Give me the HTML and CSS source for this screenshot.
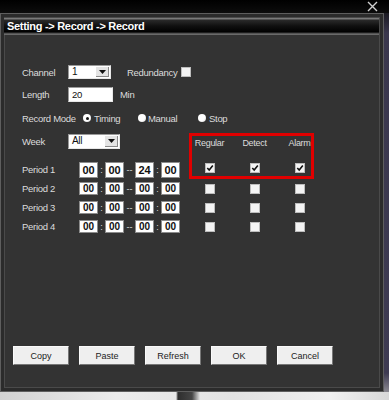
FILE: index.html
```html
<!DOCTYPE html>
<html lang="en">
<head>
    <meta charset="UTF-8">
    <meta name="viewport" content="width=device-width, initial-scale=1.0">
    <title>Setting - Record</title>
    <link rel="stylesheet" href="styles.css">
</head>
<body>
    <div class="topbar">
        <svg class="close" width="11" height="11" viewBox="0 0 11 11">
            <path d="M1 1 L10 10 M10 1 L1 10" stroke="#d0d0d0" stroke-width="1.4" fill="none"/>
        </svg>
    </div>

    <div class="main">
        <div class="dialog">
            <div class="title">Setting -&gt; Record -&gt; Record</div>

            <div class="content">
                <div class="row row-channel">
                    <span class="label">Channel</span>
                    <div class="select select-channel">
                        <span class="value">1</span>
                        <span class="arrow"><svg width="7" height="4" viewBox="0 0 7 4"><path d="M0 0 H7 L3.5 4 Z" fill="#111"/></svg></span>
                    </div>
                    <span class="text redundancy">Redundancy</span>
                    <span class="box"></span>
                </div>

                <div class="row row-length">
                    <span class="label">Length</span>
                    <div class="input">20</div>
                    <span class="text unit">Min</span>
                </div>

                <div class="row row-mode">
                    <span class="label label-wide">Record Mode</span>
                    <span class="radio checked"></span><span class="text opt opt-timing">Timing</span>
                    <span class="radio"></span><span class="text opt opt-manual">Manual</span>
                    <span class="radio"></span><span class="text opt">Stop</span>
                </div>

                <div class="schedule">
                    <div class="highlight"></div>

                    <div class="line line-week">
                        <span class="label">Week</span>
                        <div class="cell">
                            <div class="select select-week">
                                <span class="value">All</span>
                                <span class="arrow"><svg width="7" height="4" viewBox="0 0 7 4"><path d="M0 0 H7 L3.5 4 Z" fill="#111"/></svg></span>
                            </div>
                        </div>
                        <span class="head">Regular</span>
                        <span class="head">Detect</span>
                        <span class="head">Alarm</span>
                    </div>

                    <div class="line line-first">
                        <span class="label">Period 1</span>
                        <div class="times">
                            <span class="time">00</span><span class="sep">:</span><span class="time">00</span><span class="sep sep-dash">--</span><span class="time">24</span><span class="sep">:</span><span class="time">00</span>
                        </div>
                        <span class="check"><span class="box"><svg width="8" height="8" viewBox="0 0 8 8"><path d="M1.3 4 L3.2 6 L6.8 1.6" stroke="#111" stroke-width="1.6" fill="none"/></svg></span></span>
                        <span class="check"><span class="box"><svg width="8" height="8" viewBox="0 0 8 8"><path d="M1.3 4 L3.2 6 L6.8 1.6" stroke="#111" stroke-width="1.6" fill="none"/></svg></span></span>
                        <span class="check"><span class="box"><svg width="8" height="8" viewBox="0 0 8 8"><path d="M1.3 4 L3.2 6 L6.8 1.6" stroke="#111" stroke-width="1.6" fill="none"/></svg></span></span>
                    </div>

                    <div class="line">
                        <span class="label">Period 2</span>
                        <div class="times">
                            <span class="time">00</span><span class="sep">:</span><span class="time">00</span><span class="sep sep-dash">--</span><span class="time">00</span><span class="sep">:</span><span class="time">00</span>
                        </div>
                        <span class="check"><span class="box"></span></span>
                        <span class="check"><span class="box"></span></span>
                        <span class="check"><span class="box"></span></span>
                    </div>

                    <div class="line">
                        <span class="label">Period 3</span>
                        <div class="times">
                            <span class="time">00</span><span class="sep">:</span><span class="time">00</span><span class="sep sep-dash">--</span><span class="time">00</span><span class="sep">:</span><span class="time">00</span>
                        </div>
                        <span class="check"><span class="box"></span></span>
                        <span class="check"><span class="box"></span></span>
                        <span class="check"><span class="box"></span></span>
                    </div>

                    <div class="line">
                        <span class="label">Period 4</span>
                        <div class="times">
                            <span class="time">00</span><span class="sep">:</span><span class="time">00</span><span class="sep sep-dash">--</span><span class="time">00</span><span class="sep">:</span><span class="time">00</span>
                        </div>
                        <span class="check"><span class="box"></span></span>
                        <span class="check"><span class="box"></span></span>
                        <span class="check"><span class="box"></span></span>
                    </div>
                </div>
            </div>

            <div class="buttons">
                <button>Copy</button>
                <button>Paste</button>
                <button>Refresh</button>
                <button>OK</button>
                <button>Cancel</button>
            </div>
        </div>
        <div class="edge"></div>
    </div>

    <div class="photo"></div>
</body>
</html>
```

FILE: styles.css
```css
body {
    margin: 0;
    width: 389px;
    height: 400px;
    overflow: hidden;
    background: #000;
    font-family: 'Liberation Sans', sans-serif;
    display: flex;
    flex-direction: column;
}
.topbar {
    height: 13px;
    background: linear-gradient(180deg, #000, #0c0c0c);
    display: flex;
    justify-content: flex-end;
    align-items: center;
    padding-right: 11px;
}
.close {
    display: block;
}
.main {
    display: flex;
    height: 379px;
}
.dialog {
    width: 384px;
    box-sizing: border-box;
    background: #333333;
    border: 1px solid #5e5e5e;
    box-shadow: inset 0 0 0 3px #2b2b2b, inset 0 0 0 4px #4a4a4a;
    padding: 4px 3px 0 3px;
    display: flex;
    flex-direction: column;
}
.edge {
    width: 5px;
    background: linear-gradient(180deg, #1b1a22 0, #3a374d 20px, #3e3b52 360px, #8a8890 379px);
}
.photo {
    flex: 1;
    background:
        linear-gradient(90deg, transparent 0, transparent 176px, #2e2e2e 178px, #454545 192px, transparent 200px),
        linear-gradient(90deg, #d2d2d2, #ececec 30%, #e2e2e2 60%, #f0f0f0 85%, #d8d8d8);
}

/* pasek tytulu */
.title {
    height: 17px;
    box-sizing: border-box;
    padding: 1px 0 0 3px;
    color: #fff;
    font-weight: bold;
    font-size: 11px;
    letter-spacing: -0.3px;
    line-height: 15px;
    background: linear-gradient(180deg, #7a7a7a 0, #7a7a7a 1px, #2a2a2a 2px, #101010 8px, #000 14px, #3a3a3a 15px, #6a6a6a 16px, #6a6a6a 17px);
    border-right: 1px solid #4a4a4a;
}

.content {
    padding: 30px 0 0 18px;
    position: relative;
    color: #dcdcdc;
    font-size: 9.5px;
    letter-spacing: -0.3px;
}
.row {
    display: flex;
    align-items: center;
}
.label {
    width: 46px;
    flex-shrink: 0;
}
.label-wide {
    width: 61px;
}
.text {
    white-space: nowrap;
}
.row-channel {
    height: 14px;
}
.row-length {
    height: 15px;
    margin-top: 8px;
}
.row-mode {
    height: 14px;
    margin-top: 9px;
}

.select {
    display: flex;
    box-sizing: border-box;
    background: #fff;
    border: 1px solid #9a9a9a;
    border-right-color: #e8e8e8;
    border-bottom-color: #e8e8e8;
    color: #111;
    height: 14px;
    padding: 1px;
}
.select-channel {
    width: 43px;
}
.select-week {
    width: 52px;
    height: 15px;
}
.select .value {
    flex: 1;
    padding-left: 2px;
    font-size: 10px;
    line-height: 10px;
}
.select .arrow {
    width: 13px;
    background: #e4e4e4;
    border-left: 1px solid #fff;
    box-shadow: inset -1px -1px 0 #8a8a8a;
    display: flex;
    align-items: center;
    justify-content: center;
}
.select .arrow svg {
    display: block;
}
.redundancy {
    margin-left: 16px;
    margin-right: 4px;
}
.box {
    width: 8px;
    height: 8px;
    background: #f4f4f4;
    border: 1px solid #bdbdbd;
    display: inline-flex;
    align-items: center;
    justify-content: center;
}
.box svg {
    display: block;
}

.input {
    width: 45px;
    height: 15px;
    box-sizing: border-box;
    background: #fff;
    border: 1px solid #9a9a9a;
    border-right-color: #e8e8e8;
    border-bottom-color: #e8e8e8;
    color: #111;
    padding: 1px 0 0 3px;
    line-height: 12px;
}
.unit {
    margin-left: 7px;
}

.radio {
    width: 8px;
    height: 8px;
    border-radius: 50%;
    background: radial-gradient(circle at 40% 40%, #fff 0, #fff 50%, #cfcfcf 100%);
    display: inline-flex;
    align-items: center;
    justify-content: center;
    flex-shrink: 0;
}
.radio.checked::after {
    content: '';
    width: 3px;
    height: 3px;
    border-radius: 50%;
    background: #111;
}
.opt {
    margin-left: 3px;
}
.opt-timing {
    width: 44px;
}
.opt-manual {
    width: 50px;
    margin-left: 2px;
}

/* tabela harmonogramu */
.schedule {
    position: relative;
    margin-top: 8px;
}
.highlight {
    position: absolute;
    left: 167px;
    top: 0;
    width: 125px;
    height: 46px;
    box-sizing: border-box;
    border: 3px solid #e00000;
}
.line {
    display: grid;
    grid-template-columns: 46px 119px 45px 45px 45px;
    align-items: center;
    height: 19px;
}
.line-week {
    height: 16px;
    margin-bottom: 11px;
}
.head {
    text-align: center;
    font-size: 9px;
    padding-top: 4px;
}
.times {
    display: flex;
    align-items: center;
    padding-left: 11px;
    letter-spacing: 0;
}
.time {
    width: 19px;
    height: 13px;
    box-sizing: border-box;
    background: #fff;
    border: 1px solid #8c8c8c;
    color: #111;
    font-weight: bold;
    font-size: 10px;
    line-height: 11px;
    text-align: center;
}
.line-first .time {
    height: 16px;
    line-height: 14px;
    font-size: 11px;
}
.sep {
    width: 7px;
    text-align: center;
    font-size: 9px;
}
.sep-dash {
    width: 11px;
}
.check {
    display: flex;
    justify-content: center;
}
.line-first .check {
    margin-top: -3px;
}

.buttons {
    margin-top: auto;
    margin-bottom: 26px;
    padding-left: 9px;
    display: flex;
    gap: 10px;
}
button {
    width: 56px;
    height: 19px;
    padding: 0;
    font-family: 'Liberation Sans', sans-serif;
    font-size: 9px;
    color: #222;
    background: #efefef;
    border: 1px solid #fafafa;
    border-right-color: #777;
    border-bottom-color: #777;
    cursor: pointer;
}
```
